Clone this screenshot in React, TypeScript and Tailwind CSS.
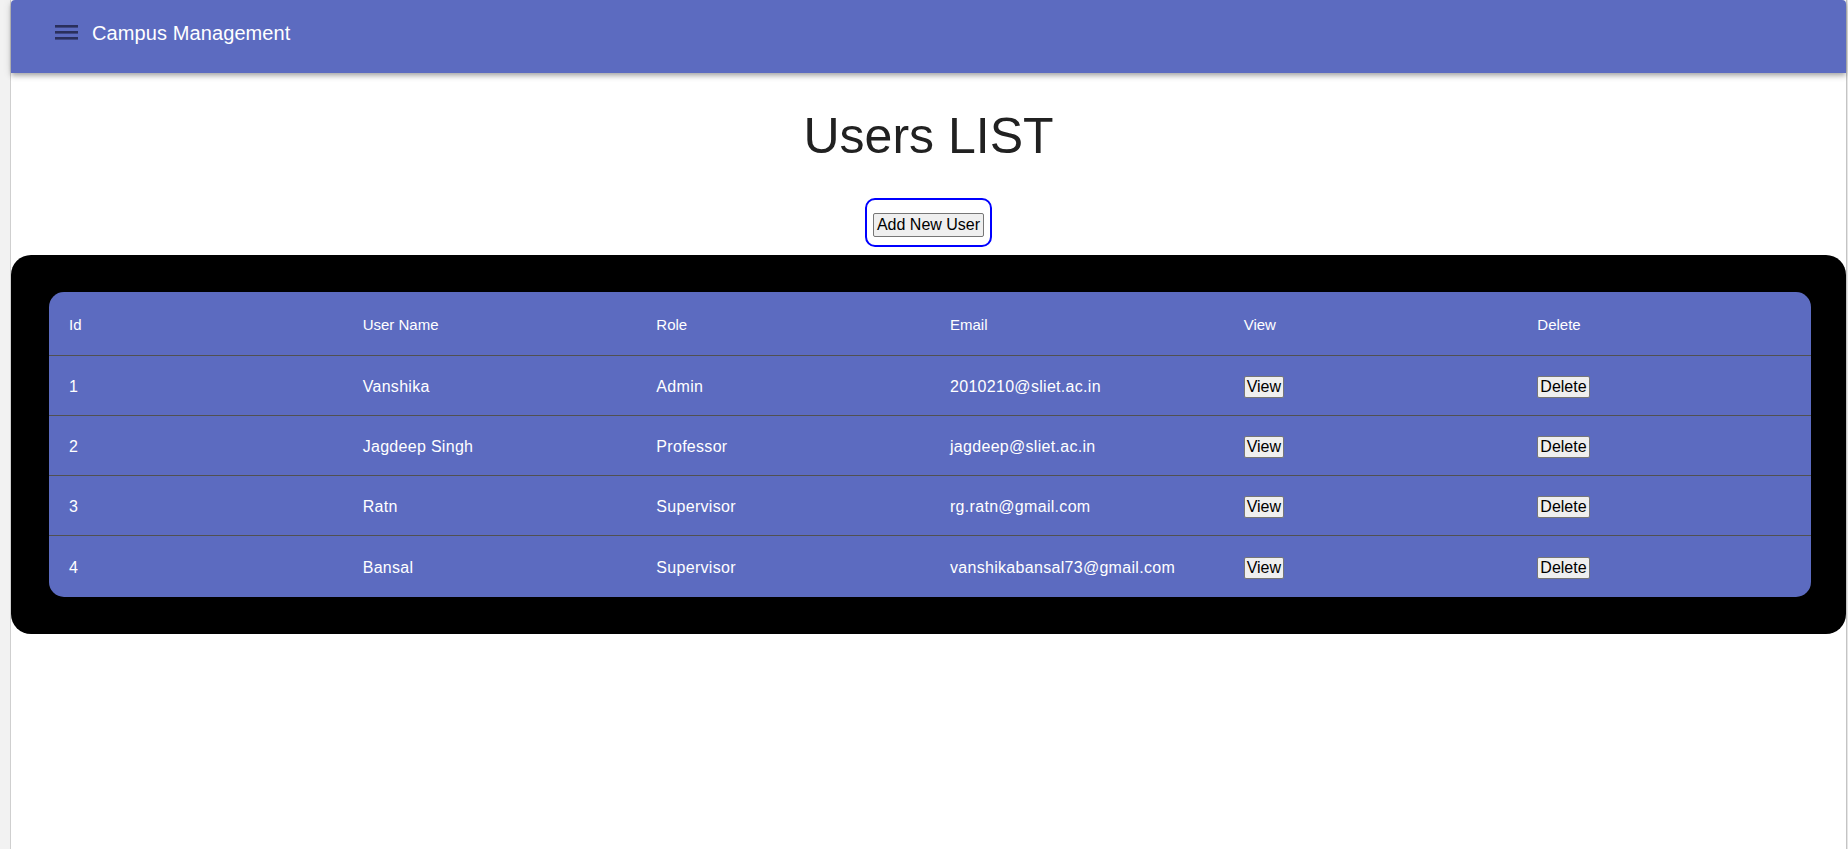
const users = [
  { id: 1, name: "Vanshika", role: "Admin", email: "2010210@sliet.ac.in" },
  { id: 2, name: "Jagdeep Singh", role: "Professor", email: "jagdeep@sliet.ac.in" },
  { id: 3, name: "Ratn", role: "Supervisor", email: "rg.ratn@gmail.com" },
  { id: 4, name: "Bansal", role: "Supervisor", email: "vanshikabansal73@gmail.com" },
];

const headers = ["Id", "User Name", "Role", "Email", "View", "Delete"];

const MenuIcon = () => (
  <svg width="23" height="16" viewBox="0 0 23 16" className="text-[#2a2f5c]">
    <rect x="0" y="0" width="23" height="2.6" fill="currentColor" />
    <rect x="0" y="6" width="23" height="2.6" fill="currentColor" />
    <rect x="0" y="12" width="23" height="2.6" fill="currentColor" />
  </svg>
);

const SmallButton = ({ label }: { label: string }) => (
  <button className="h-[22px] px-[2px] border border-[#767676] rounded-[2px] bg-[#efefef] text-black text-[16px] leading-none tracking-normal">
    {label}
  </button>
);

const App = () => {
  return (
    <div className="flex min-h-screen h-[849px] font-['Liberation_Sans',Arial,sans-serif]">
      <div className="w-[11px] bg-[#f2f2f2] border-r border-[#cfcfcf]" />

      <div className="flex-1 flex flex-col bg-white">
        <header className="relative z-10 h-[73px] bg-[#5c6bc0] rounded-t-[4px] shadow-[0_2px_4px_-1px_rgba(0,0,0,0.2),0_4px_5px_0_rgba(0,0,0,0.14),0_1px_10px_0_rgba(0,0,0,0.12)]">
          <div className="flex items-center h-[66px] pl-[44px] gap-[14px]">
            <MenuIcon />
            <span className="text-white text-[20px] tracking-[0.1px]">Campus Management</span>
          </div>
        </header>

        <h1 className="mt-[38px] text-center text-[50px] leading-[50px] text-[#212121]">Users LIST</h1>

        <div className="flex justify-center mt-[37px]">
          <div className="flex border-2 border-[#0000ff] rounded-[10px] px-[6px] pt-[13px] pb-[8px]">
            <button className="w-[111px] h-[24px] border border-[#767676] rounded-[2px] bg-[#efefef] text-black text-[16px] leading-none whitespace-nowrap">
              Add New User
            </button>
          </div>
        </div>

        <div className="mt-[8px] bg-black rounded-[20px] pl-[38px] pr-[35px] py-[37px]">
          <div className="bg-[#5c6bc0] rounded-[15px] text-white">
            <div className="grid grid-cols-6 items-center h-[64px] pt-[3px] border-b border-[#515151] text-[15px]">
              {headers.map((h) => (
                <div key={h} className="pl-[20px]">{h}</div>
              ))}
            </div>
            {users.map((u, i) => (
              <div
                key={u.id}
                className={`grid grid-cols-6 items-center pt-[2px] text-[16px] tracking-[0.3px] ${i < users.length - 1 ? "h-[60px] border-b border-[#515151]" : "h-[61px]"}`}
              >
                <div className="pl-[20px]">{u.id}</div>
                <div className="pl-[20px]">{u.name}</div>
                <div className="pl-[20px]">{u.role}</div>
                <div className="pl-[20px]">{u.email}</div>
                <div className="pl-[20px]"><SmallButton label="View" /></div>
                <div className="pl-[20px]"><SmallButton label="Delete" /></div>
              </div>
            ))}
          </div>
        </div>
      </div>

      <div className="w-[2px] flex">
        <div className="w-px bg-[#c4c4c4]" />
        <div className="w-px bg-[#e6e6e6]" />
      </div>
    </div>
  );
};

export default App;
